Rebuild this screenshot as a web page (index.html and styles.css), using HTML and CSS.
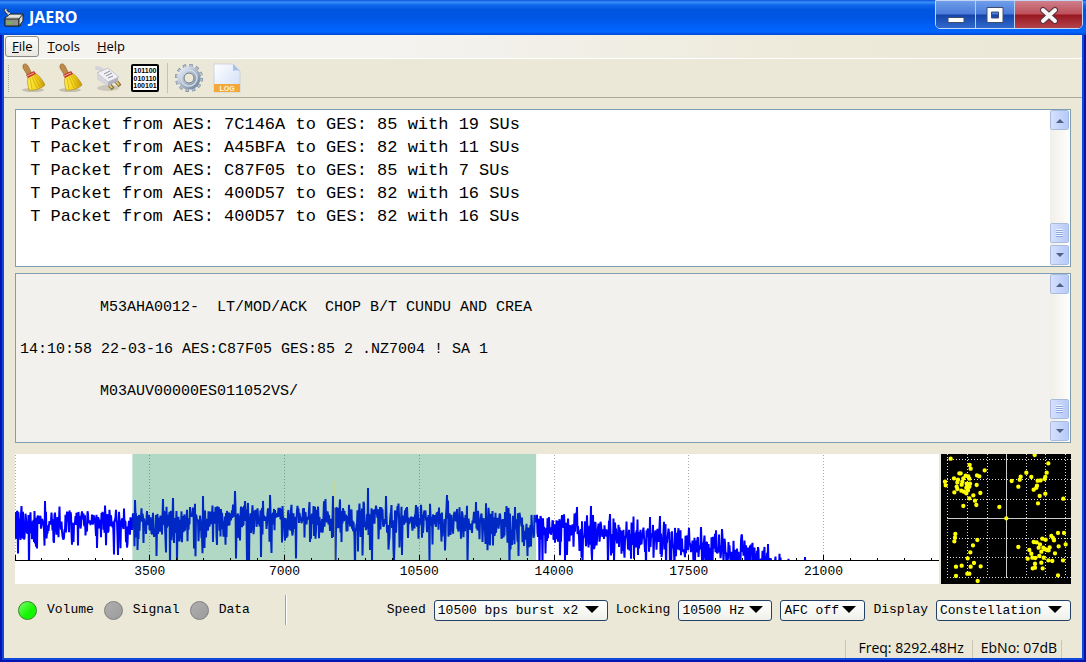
FILE: index.html
```html
<!DOCTYPE html>
<html lang="en">
<head>
<meta charset="utf-8">
<title>JAERO</title>
<link rel="stylesheet" href="styles.css">
</head>
<body>
<div class="window">
  <header class="titlebar">
    <svg class="app-icon" width="20" height="20" viewBox="0 0 20 20">
      <path d="M1 2l3 3M2 1c-1 2 1 5 4 4M4 5l1 4" stroke="#333" stroke-width="3" fill="none"/>
      <path d="M1 2l3 3M2 1c-1 2 1 5 4 4M4 5l1 4" stroke="#ddd" stroke-width="1.4" fill="none"/>
      <path d="M1 10l5-4h13l-3 12H1z" fill="#c6c9c1" stroke="#222"/>
      <path d="M1 11h14v7H1z" fill="#8d9287" stroke="#222"/>
      <path d="M15 11l4-5v7l-4 5z" fill="#d9dcd3" stroke="#222"/>
      <path d="M3 15h5" stroke="#70b84a" stroke-width="2"/>
      <path d="M5 8h11" stroke="#fff"/>
    </svg>
    <h1 class="title">JAERO</h1>
    <div class="window-buttons">
      <button class="winbtn minimize" aria-label="Minimize"><svg width="20" height="18" viewBox="0 0 20 18"><path d="M2 11.5h16v5H2z" fill="#fff" stroke="#414c6b"/></svg></button>
      <button class="winbtn maximize" aria-label="Maximize"><svg width="20" height="18" viewBox="0 0 20 18"><path d="M2 1.5h16v15H2zM6.500 6v6h7V6z" fill="#fff" fill-rule="evenodd" stroke="#414c6b"/></svg></button>
      <button class="winbtn close" aria-label="Close"><svg width="20" height="18" viewBox="0 0 20 18"><path d="M4 4l12 11M16 4L4 15" stroke="#5a3540" stroke-width="6" stroke-linecap="round"/><path d="M4 4l12 11M16 4L4 15" stroke="#f6f6f6" stroke-width="4" stroke-linecap="round"/></svg></button>
    </div>
  </header>

  <nav class="menubar">
    <button class="menu menu-active"><u>F</u>ile</button>
    <button class="menu"><u>T</u>ools</button>
    <button class="menu"><u>H</u>elp</button>
  </nav>

  <svg class="defs" width="0" height="0">
    <defs>
      <linearGradient id="straw" x1="0" y1="0" x2="1" y2="0"><stop offset="0" stop-color="#fff04a"/><stop offset=".5" stop-color="#f3d21a"/><stop offset="1" stop-color="#c79a08"/></linearGradient>
      <linearGradient id="steel" x1="0" y1="0" x2="1" y2="1"><stop offset="0" stop-color="#e2eaf3"/><stop offset="1" stop-color="#75869d"/></linearGradient>
      <linearGradient id="paper" x1="0" y1="0" x2="1" y2="1"><stop offset="0" stop-color="#ffffff"/><stop offset="1" stop-color="#cddcf8"/></linearGradient>
      <symbol id="broom" viewBox="0 0 28 30">
        <ellipse cx="13" cy="27" rx="11" ry="2" fill="#a9a595" opacity=".6"/>
        <path d="M3 2c2-2 4-1 5 1l4 8-4 2-5-8z" fill="#c08a45" stroke="#8a5c28" stroke-width=".6"/>
        <path d="M8 14l7-4c5 3 8 8 10 12-3 3-10 6-16 5-1-4-2-8-1-13z" fill="url(#straw)" stroke="#a87e0c" stroke-width=".6"/>
        <path d="M10 15l2 11M12 14l5 11M14 13l6 11M15 12l8 10" stroke="#c79b10" stroke-width=".6" fill="none"/>
        <path d="M6 12l8-4 2 3-8 4z" fill="#c7352b"/>
        <path d="M7 13l7-3" stroke="#f4d5bd" stroke-width=".8"/>
      </symbol>
    </defs>
  </svg>

  <div class="toolbar">
    <span class="grip"></span>
    <button class="tool" aria-label="Clear console"><svg width="28" height="30"><use href="#broom"/></svg></button>
    <button class="tool" aria-label="Clear packets"><svg width="28" height="30"><use href="#broom"/></svg></button>
    <button class="tool" aria-label="Connect">
      <svg width="30" height="30" viewBox="0 0 30 30">
        <ellipse cx="15" cy="25" rx="11" ry="3" fill="#aaa79a" opacity=".5"/>
        <path d="M4 5c2 0 4 1 6 3" stroke="#d3d3da" stroke-width="4" fill="none" stroke-linecap="round"/>
        <path d="M15 20l5 6M22 17l5 6" stroke="#8f7434" stroke-width="4"/>
        <path d="M15 20l4 5M22 17l4 5" stroke="#dcc785" stroke-width="2"/>
        <path d="M4 10l9-4 12 8v4l-10 5-11-7z" fill="#b1b1bd"/>
        <path d="M4 10l11-5 11 9-11 5z" fill="#f0f0f5" stroke="#b3b3c0" stroke-width=".7"/>
        <path d="M11 11l6-3M13 13l6-3M15 15l5-2" stroke="#8c8ca0"/>
        <path d="M4 10l11 9v4L4 16z" fill="#d6d6df"/>
      </svg>
    </button>
    <button class="tool" aria-label="Raw data">
      <svg class="binary" width="28" height="28" viewBox="0 0 28 28">
        <rect x="1" y="1" width="26" height="26" rx="1" fill="#fff" stroke="#000" stroke-width="2"/>
        <text x="14" y="9" text-anchor="middle">101100</text>
        <text x="14" y="17" text-anchor="middle">010110</text>
        <text x="14" y="24" text-anchor="middle">100101</text>
      </svg>
    </button>
    <span class="toolbar-sep"></span>
    <button class="tool" aria-label="Settings">
      <svg width="30" height="30" viewBox="-15 -15 30 30">
        <circle r="12" fill="none" stroke="#6d7f96" stroke-width="4" stroke-dasharray="3.2 3.083"/>
        <circle r="12" fill="none" stroke="#b4c2d4" stroke-width="3" stroke-dasharray="2.4 3.883" stroke-dashoffset="-.4"/>
        <circle r="8.500" fill="none" stroke="url(#steel)" stroke-width="6"/>
        <circle r="8" fill="none" stroke="#cfdbe8" stroke-width="1.500"/>
        <circle r="5" fill="#ebe8d8" stroke="#65768e"/>
      </svg>
    </button>
    <button class="tool" aria-label="Log">
      <svg class="log" width="28" height="30" viewBox="0 0 28 30">
        <path d="M1 1h19l7 7v21H1z" fill="url(#paper)" stroke="#c6cddd" stroke-width=".8"/>
        <path d="M20 1l7 7c-3-1-5-1-7 0z" fill="#a9bfea"/>
        <path d="M1 21h26v8H1z" fill="#f2a83a"/>
        <text x="14" y="28" text-anchor="middle">LOG</text>
      </svg>
    </button>
  </div>

  <main class="content">
    <section class="pane pane-console">
      <textarea class="text console" aria-label="Console" wrap="off" readonly> T Packet from AES: 7C146A to GES: 85 with 19 SUs
 T Packet from AES: A45BFA to GES: 82 with 11 SUs
 T Packet from AES: C87F05 to GES: 85 with 7 SUs
 T Packet from AES: 400D57 to GES: 82 with 16 SUs
 T Packet from AES: 400D57 to GES: 82 with 16 SUs</textarea>
      <div class="scrollbar">
        <button class="sb" aria-label="Scroll up"><svg width="8" height="5" viewBox="0 0 8 5"><path d="M0 5l4-4 4 4z" fill="#4d6185"/></svg></button>
        <span class="track"></span>
        <span class="sb thumb"></span>
        <button class="sb" aria-label="Scroll down"><svg width="8" height="5" viewBox="0 0 8 5"><path d="M0 0l4 4 4-4z" fill="#4d6185"/></svg></button>
      </div>
    </section>
    <section class="pane pane-messages">
      <textarea class="text messages" aria-label="Messages" wrap="off" readonly>

&#9;M53AHA0012-  LT/MOD/ACK  CHOP B/T CUNDU AND CREA

14:10:58 22-03-16 AES:C87F05 GES:85 2 .NZ7004 ! SA 1

&#9;M03AUV00000ES011052VS/</textarea>
      <div class="scrollbar">
        <button class="sb" aria-label="Scroll up"><svg width="8" height="5" viewBox="0 0 8 5"><path d="M0 5l4-4 4 4z" fill="#4d6185"/></svg></button>
        <span class="track"></span>
        <span class="sb thumb"></span>
        <button class="sb" aria-label="Scroll down"><svg width="8" height="5" viewBox="0 0 8 5"><path d="M0 0l4 4 4-4z" fill="#4d6185"/></svg></button>
      </div>
    </section>

    <div class="plots">
      <svg class="spectrum" id="spectrum" role="img" aria-label="Spectrum">
        <g id="grid"></g>
        <svg width="100%" height="106" viewBox="0 0 924 106" preserveAspectRatio="none"><path id="trace" class="trace"/></svg>
        <rect class="band" x="12.7%" y="0" width="43.7%" height="106"/>
        <line class="marker" x1="34.6%" x2="34.6%" y1="27" y2="106"/>
        <line class="axis" x1="0" x2="100%" y1="106.5" y2="106.5"/>
        <g id="ticks"></g>
      </svg>
      <svg class="constellation" width="130" height="130" viewBox="123 27 390 390" role="img" aria-label="Constellation">
        <path class="dots" d="M142.5 27V397M202.5 27V397M262.5 27V397M379.5 27V397M436.5 27V397M496.5 27V397M142 43.5H513M142 103.5H513M142 163.5H513M142 280.5H513M142 337.5H513M142 397.5H513"/>
        <path class="cross" d="M319.5 27V399M142 220.5H513"/>
        <path class="points" d="M152 41h0M209 60h0M212 71h0M254 76h0M178 85h0M182 85h0M231 91h0M238 94h0M135 110h0M137 121h0M162 100h0M174 104h0M190 100h0M197 92h0M205 94h0M208 101h0M172 112h0M187 110h0M185 119h0M200 116h0M210 116h0M230 120h0M170 125h0M172 132h0M163 142h0M184 137h0M192 140h0M199 145h0M204 136h0M199 128h0M208 125h0M241 144h0M220 151h0M208 160h0M225 167h0M190 183h0M229 180h0M298 186h0M319 220h0M404 30h0M445 55h0M379 83h0M440 83h0M362 95h0M359 104h0M335 108h0M394 96h0M436 96h0M434 102h0M413 107h0M422 106h0M355 125h0M411 122h0M409 128h0M401 134h0M436 146h0M419 153h0M490 161h0M414 175h0M166 267h0M165 278h0M163 289h0M232 285h0M219 301h0M211 322h0M203 340h0M222 354h0M185 362h0M168 365h0M212 365h0M242 364h0M202 386h0M208 386h0M168 393h0M233 408h0M355 306h0M474 264h0M492 264h0M454 273h0M459 279h0M462 286h0M427 281h0M437 284h0M401 291h0M410 292h0M420 298h0M416 308h0M430 308h0M449 307h0M476 304h0M497 298h0M388 315h0M394 326h0M424 320h0M434 312h0M440 315h0M446 316h0M465 325h0M383 341h0M397 338h0M406 339h0M418 333h0M431 338h0M445 346h0M457 348h0M489 346h0M405 356h0M424 353h0M398 370h0M405 368h0M428 370h0M474 391h0"/>
      </svg>
    </div>

    <div class="controls">
      <div class="leds">
        <span class="led led-on"></span><span>Volume</span>
        <span class="led"></span><span>Signal</span>
        <span class="led"></span><span>Data</span>
      </div>
      <span class="control-sep"></span>
      <div class="fields">
        <label for="speed">Speed</label>
        <span class="combo combo-xl"><select id="speed"><option>10500 bps burst x2</option></select></span>
        <label for="locking">Locking</label>
        <span class="combo combo-m"><select id="locking"><option>10500 Hz</option></select></span>
        <span class="combo combo-s"><select aria-label="AFC"><option>AFC off</option></select></span>
        <label for="display">Display</label>
        <span class="combo combo-l"><select id="display"><option>Constellation</option></select></span>
      </div>
    </div>
  </main>

  <footer class="statusbar">
    <span class="status">Freq: 8292.48Hz</span>
    <span class="status">EbNo: 07dB</span>
  </footer>
</div>
<script src="plot.js"></script>
</body>
</html>
```
FILE: plot.js
```
(function () {
  var NS = "http://www.w3.org/2000/svg";
  var SPAN = 24000;

  function add(parent, name, attrs, text) {
    var el = document.createElementNS(NS, name);
    for (var key in attrs) el.setAttribute(key, attrs[key]);
    if (text) el.textContent = text;
    parent.appendChild(el);
  }

  var grid = document.getElementById("grid");
  var ticks = document.getElementById("ticks");
  for (var f = 0; f < SPAN; f += 700) {
    var x = (f / SPAN * 100) + "%";
    var major = f % 3500 === 0;
    if (major) add(grid, "line", { class: "gridline", x1: x, x2: x, y1: 1, y2: 106 });
    add(ticks, "line", { class: "axis", x1: x, x2: x, y1: major ? 101 : 104, y2: 107 });
    if (major && f) add(ticks, "text", { class: "tick-label", x: x, y: 121 }, String(f));
  }

  // Noise floor in plot units: [x, y] knots, interpolated linearly.
  var floor = [[0, 67], [120, 68], [220, 63], [350, 61], [450, 65], [540, 72], [620, 79],
               [690, 88], [730, 98], [760, 109], [800, 128], [924, 180]];
  var peaks = [[30, 47], [120, 46], [148, 45], [158, 44], [188, 42], [220, 37], [255, 41],
               [318, 42], [353, 34], [371, 42], [432, 41], [461, 48], [562, 53], [576, 52],
               [595, 60], [635, 63], [645, 62], [686, 73], [707, 75], [727, 81], [753, 90],
               [790, 103]];
  var seed = 10500;
  function random() {
    seed = (seed * 16807) % 2147483647;
    return seed / 2147483647;
  }
  function base(x) {
    for (var i = 1; i < floor.length; i++) {
      if (x <= floor[i][0]) {
        var a = floor[i - 1], b = floor[i];
        return a[1] + (b[1] - a[1]) * (x - a[0]) / (b[0] - a[0]);
      }
    }
    return 200;
  }
  var d = "", next = 0;
  for (var px = 0; px < 924; px += 0.5) {
    var db = 10 * Math.log10(-Math.log(random() * 0.998 + 0.001));
    var y = base(px) - 2.2 * db;
    if (next < peaks.length && px >= peaks[next][0]) y = peaks[next++][1];
    d += (d ? "L" : "M") + px.toFixed(2) + " " + Math.min(115, y).toFixed(1);
  }
  document.getElementById("trace").setAttribute("d", d);
})();
```
FILE: styles.css
```css
* { box-sizing: border-box; }
body {
  margin: 0;
  font-family: "Open Sans", "Noto Sans", sans-serif;
  font-size: 14px;
  color: #000;
}
button { padding: 0; border: 0; background: none; font: inherit; color: inherit; }
.window {
  display: flex;
  flex-direction: column;
  min-height: 100vh;
  padding: 0 4px 4px;
  background: #ebe8d8;
  box-shadow: inset 0 0 0 2px #0414b0, inset 0 0 0 4px #1048dc;
}
.defs { position: absolute; }

.titlebar {
  display: flex;
  align-items: center;
  height: 35px;
  margin: 0 -4px;
  padding-left: 4px;
  background: linear-gradient(#0a50d8 0, #3a90fb 2px, #1067ea 5px, #0055e0 10px, #0055e4 18px, #0062fb 28px, #0064ff 32px, #0046d0 35px);
}
.app-icon { flex: none; }
.title {
  flex: 1;
  margin: 0 0 2px 5px;
  font-size: 16px;
  line-height: 20px;
  font-weight: 700;
  color: #fff;
}
.window-buttons {
  display: flex;
  align-self: flex-start;
  height: 29px;
  margin-right: 3px;
  border: 1px solid #c4d6f5;
  border-radius: 0 0 5px 5px;
  overflow: hidden;
}
.winbtn {
  display: flex;
  align-items: center;
  justify-content: center;
  background: linear-gradient(#6f9de9, #4a7cda 48%, #1444a8 52%, #3169cf);
  border-right: 1px solid #b9cef4;
}
.minimize { width: 40px; }
.maximize { width: 39px; }
.close {
  width: 67px;
  border-right: 0;
  background: linear-gradient(#cf7f8b, #bd4f59 48%, #981720 52%, #b4434b);
}

.menubar {
  display: flex;
  gap: 1px;
  height: 24px;
  padding: 1px;
  border-bottom: 1px solid #fff;
  background: linear-gradient(90deg, #f5f3ee, #f4f3f0 35%, #edeada 75%, #ebe8d8);
}
.menu {
  height: 21px;
  padding: 0 7px;
  font-size: 13px;
  line-height: 19px;
  border: 1px solid transparent;
  border-radius: 3px;
}
.menu-active { border-color: #8d8b82; padding: 0 5px 0 6px; background: linear-gradient(#fdfdfb, #e9e7de); }

.toolbar {
  display: flex;
  align-items: center;
  height: 39px;
  padding-left: 4px;
  border-bottom: 1px solid #aaa89d;
}
.grip { width: 1px; height: 27px; margin-right: 6px; border-left: 1px dotted #aaa79a; }
.tool { display: flex; align-items: center; justify-content: center; width: 37px; height: 36px; }
.toolbar-sep { width: 1px; height: 30px; margin: 0 2px 0 4px; background: #c5c2b5; }
.toolbar-sep ~ .tool { width: 38px; }
.binary text { font: bold 7px "Liberation Sans", sans-serif; }
.log text { font: bold 7px "Liberation Sans", sans-serif; fill: #fff6dd; }

.content {
  flex: 1;
  display: flex;
  flex-direction: column;
  padding: 11px 11px 0;
}
.pane { display: flex; padding: 0; border: 1px solid #7f9db0; }
.pane-console { flex: 158 1 0; min-height: 120px; margin-bottom: 6px; background: #fff; }
.pane-messages { flex: 170 1 0; min-height: 130px; margin-bottom: 11px; background: #f2f1ee; }
.text {
  flex: 1;
  min-width: 0;
  margin: 0;
  padding: 3px 4px;
  border: 0;
  outline: 0;
  resize: none;
  overflow: hidden;
  background: transparent;
  color: #000;
  font-family: "Liberation Mono", monospace;
}
.console { font-size: 17px; line-height: 23px; }
.messages { padding-top: 2px; font-size: 15px; line-height: 21px; tab-size: 80px; }
.scrollbar {
  display: flex;
  flex-direction: column;
  width: 20px;
  padding: 0 1px 1px 0;
  background: linear-gradient(90deg, #f0efe8, #fefefb);
}
.track { flex: 1; }
.sb {
  display: flex;
  align-items: center;
  justify-content: center;
  height: 20px;
  border: 1px solid #fff;
  outline: 1px solid #a9bcdf;
  outline-offset: -1px;
  border-radius: 2px;
  background: linear-gradient(90deg, #d5e0fd, #b7c9f8);
}
.thumb { margin-bottom: 2px; }
.thumb::before {
  content: "";
  width: 7px;
  height: 8px;
  background: repeating-linear-gradient(#edf3ff 0 1px, #8fa8e2 1px 2px);
}

.plots { display: flex; gap: 2px; height: 130px; }
.spectrum { flex: 1; min-width: 0; height: 130px; background: #fff; }
.constellation { flex: none; background: #000; }
.gridline { stroke: #a9a9a9; stroke-dasharray: 1 2; shape-rendering: crispEdges; }
.trace { fill: none; stroke: #00f; stroke-width: 2px; stroke-linejoin: bevel; }
.band { fill: #008040; fill-opacity: .31; }
.marker { stroke: #d4dc74; opacity: .6; }
.axis { stroke: #000; shape-rendering: crispEdges; }
.tick-label { font: 13px "Liberation Mono", monospace; text-anchor: middle; }
.dots { fill: none; stroke: #ddd; stroke-width: 3px; stroke-dasharray: 3 6; shape-rendering: crispEdges; }
.cross { fill: none; stroke: #ccc; stroke-width: 3px; shape-rendering: crispEdges; }
.points { fill: none; stroke: #ff0; stroke-width: 13px; stroke-linecap: round; }

.controls {
  display: flex;
  align-items: center;
  height: 52px;
  font: 13px/20px "Liberation Mono", monospace;
}
.leds { display: flex; align-items: center; gap: 10px; padding-left: 3px; }
.led {
  width: 19px;
  height: 19px;
  border: 1px solid #7d7d7d;
  border-radius: 50%;
  background: linear-gradient(135deg, #b0afb0, #9c9b9c);
}
.led-on { border-color: #2c8a22; background: linear-gradient(135deg, #7dff70, #14f500 60%); }
.control-sep { width: 2px; height: 30px; margin-left: 35px; border-left: 1px solid #a5a297; background: #fff; }
.fields { display: flex; align-items: center; gap: 8px; margin-left: auto; }
.combo { position: relative; display: flex; }
.combo select {
  width: 100%;
  height: 21px;
  padding: 0 0 0 3px;
  appearance: none;
  border: 1px solid #244266;
  border-radius: 3px;
  background: linear-gradient(#fff, #f0f0ea);
  color: #000;
  font: inherit;
}
.combo::after {
  content: "";
  position: absolute;
  right: 9px;
  top: 6px;
  border: solid transparent;
  border-width: 7px 7px 0;
  border-top-color: #000;
  pointer-events: none;
}
.combo-xl { width: 174px; }
.combo-l { width: 135px; }
.combo-m { width: 94px; }
.combo-s { width: 85px; }

.statusbar {
  display: flex;
  justify-content: flex-end;
  align-items: flex-end;
  height: 22px;
  padding-right: 20px;
}
.status {
  height: 18px;
  padding: 0 8px 0 12px;
  border-left: 1px solid #c9c6b8;
  line-height: 16px;
}
.status:last-child { padding: 0 4px 0 8px; border-right: 1px solid #c9c6b8; }
```
